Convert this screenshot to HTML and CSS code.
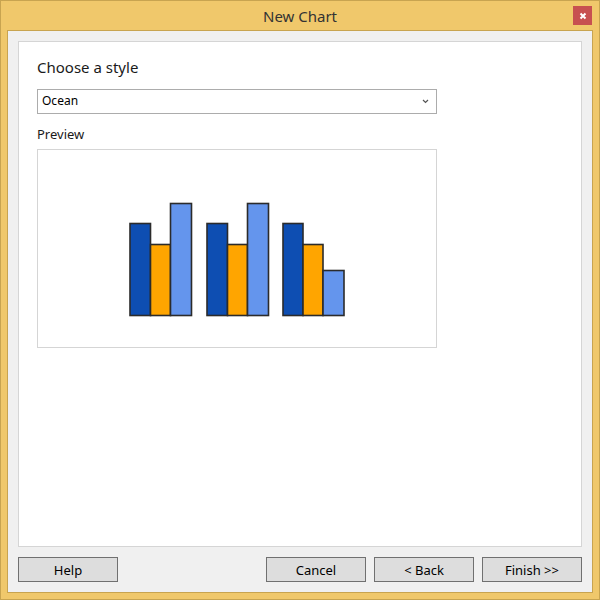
FILE: index.html
```html
<!DOCTYPE html>
<html>
<head>
<meta charset="utf-8">
<link rel="stylesheet" href="styles.css">
</head>
<body>
<div class="window">
  <div class="titlebar">
    <span class="title">New Chart</span>
    <div class="close">
      <svg width="8" height="8" viewBox="0 0 8 8"><path d="M1.5 1.5 L6.5 6.5 M6.5 1.5 L1.5 6.5" stroke="#fff" stroke-width="2"/></svg>
    </div>
  </div>
  <div class="client">
    <div class="panel">
      <div class="heading">Choose a style</div>
      <div class="select">
        <span class="value">Ocean</span>
        <svg class="chev" width="7" height="5" viewBox="0 0 7 5"><path d="M1 1 L3.5 3.5 L6 1" stroke="#555" stroke-width="1.2" fill="none"/></svg>
      </div>
      <div class="label">Preview</div>
      <div class="preview">
        <svg width="398" height="197" viewBox="0 0 398 197">
          <g stroke="#2b2b2b" stroke-width="1.6" stroke-linejoin="miter">
            <rect x="92" y="73.5" width="20.5" height="92" fill="#0e4eb2"/>
            <rect x="112.5" y="94.5" width="20" height="71" fill="#ffa500"/>
            <rect x="132.5" y="53.5" width="21" height="112" fill="#6495ed"/>
            <rect x="169" y="73.5" width="20.5" height="92" fill="#0e4eb2"/>
            <rect x="189.5" y="94.5" width="20" height="71" fill="#ffa500"/>
            <rect x="209.5" y="53.5" width="21" height="112" fill="#6495ed"/>
            <rect x="245" y="73.5" width="20" height="92" fill="#0e4eb2"/>
            <rect x="265" y="94.5" width="20" height="71" fill="#ffa500"/>
            <rect x="285" y="120.5" width="21" height="45" fill="#6495ed"/>
          </g>
        </svg>
      </div>
    </div>
    <div class="buttons">
      <button class="btn">Help</button>
      <div class="spacer"></div>
      <button class="btn">Cancel</button>
      <button class="btn">&lt; Back</button>
      <button class="btn">Finish &gt;&gt;</button>
    </div>
  </div>
</div>
</body>
</html>
```
FILE: styles.css
```css
html, body {
  margin: 0;
  padding: 0;
}
body {
  font-family: "Noto Sans", "Open Sans", sans-serif;
  width: 600px;
  height: 600px;
}
.window {
  box-sizing: border-box;
  width: 600px;
  height: 600px;
  background: #f0c86b;
  border: 1px solid #c8a450;
  display: flex;
  flex-direction: column;
}
.titlebar {
  height: 29px;
  position: relative;
  display: flex;
  align-items: center;
  justify-content: center;
}
.title {
  font-size: 15px;
  color: #333;
  margin-top: 1px;
}
.close {
  position: absolute;
  right: 7px;
  top: 5px;
  width: 19px;
  height: 19px;
  background: #c75050;
  display: flex;
  align-items: center;
  justify-content: center;
}
.client {
  flex: 1;
  margin: 0 6px 6px 6px;
  border: 1px solid #c8a450;
  background: #f0f0f0;
  padding: 10px;
  display: flex;
  flex-direction: column;
  gap: 10px;
}
.panel {
  flex: 1;
  background: #fff;
  border: 1px solid #d5d5d5;
  padding: 15px 18px 0 18px;
}
.heading {
  font-size: 15px;
  color: #1a1a1a;
  line-height: 20px;
}
.select {
  margin-top: 12px;
  width: 400px;
  height: 25px;
  box-sizing: border-box;
  border: 1px solid #acacac;
  display: flex;
  align-items: center;
  justify-content: space-between;
  padding: 0 7px 0 4px;
  font-size: 12px;
  color: #000;
}
.value {
  margin-top: -3px;
}
.label {
  margin-top: 11px;
  font-size: 13px;
  line-height: 18px;
  color: #1a1a1a;
}
.preview {
  margin-top: 6px;
  width: 400px;
  height: 199px;
  box-sizing: border-box;
  border: 1px solid #d5d5d5;
}
.preview svg {
  display: block;
}
.buttons {
  display: flex;
  gap: 8px;
  height: 25px;
}
.spacer {
  flex: 1;
}
.btn {
  width: 100px;
  height: 25px;
  box-sizing: border-box;
  border: 1px solid #707070;
  background: #dddddd;
  font-family: "Noto Sans", "Open Sans", sans-serif;
  font-size: 13px;
  color: #000;
  padding: 0;
  margin: 0;
}
```
